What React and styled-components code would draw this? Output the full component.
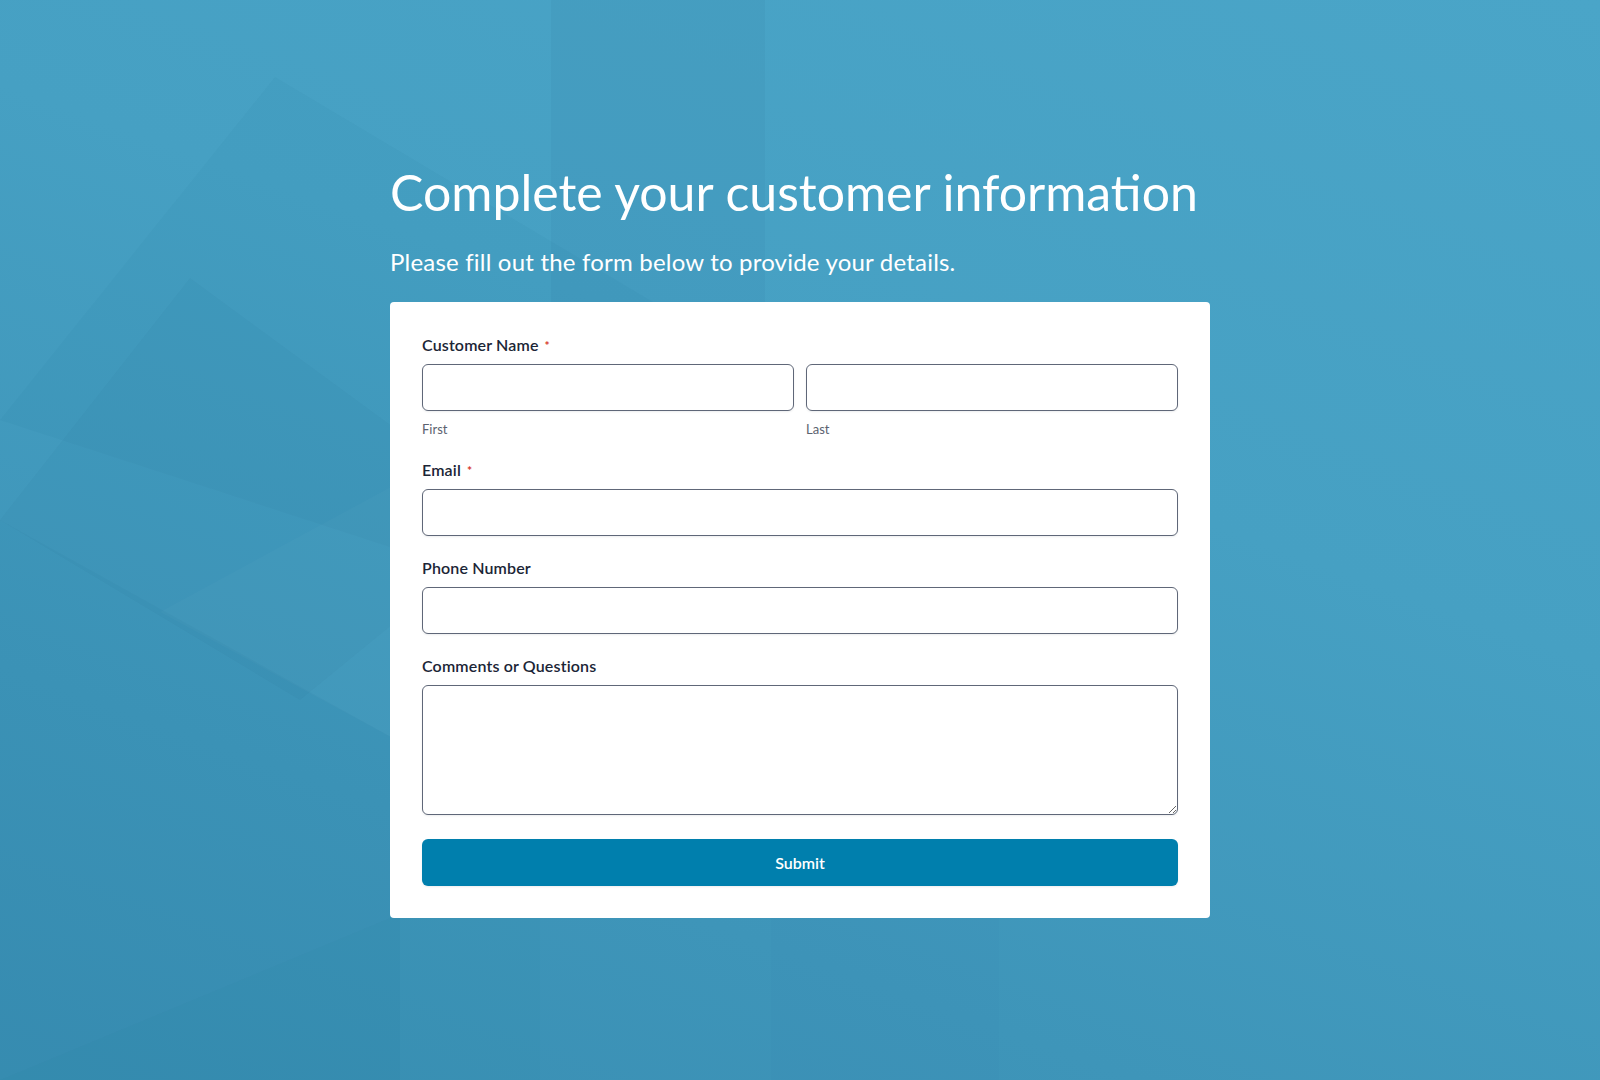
import React from "react";
import styled, { createGlobalStyle } from "styled-components";

const GlobalStyle = createGlobalStyle`
  * { box-sizing: border-box; }
  html, body { margin: 0; padding: 0; }
  body {
    font-family: Lato, "Open Sans", "Liberation Sans", sans-serif;
    -webkit-font-smoothing: antialiased;
  }
`;

const Page = styled.div`
  position: relative;
  min-height: 100vh;
  overflow: hidden;
  background: linear-gradient(200deg, #4aa5c8 0%, #46a0c3 40%, #3e95b9 75%, #398eb3 100%);
`;

const Backdrop = styled.svg`
  position: absolute;
  inset: 0;
  width: 100%;
  height: 100%;
  pointer-events: none;
`;

const Content = styled.main`
  position: relative;
  width: 820px;
  margin: 0 auto;
  padding: 162px 0 120px;
  display: flex;
  flex-direction: column;
`;

const Title = styled.h1`
  margin: 0;
  font-family: Lato, "Liberation Sans", sans-serif;
  font-weight: 400;
  font-size: 50px;
  line-height: 60px;
  color: #ffffff;
  letter-spacing: 0;
`;

const Subtitle = styled.p`
  margin: 25px 0 26px;
  font-size: 24px;
  line-height: 29px;
  font-weight: 400;
  color: #ffffff;
  letter-spacing: 0.2px;
`;

const Card = styled.form`
  background: #ffffff;
  border-radius: 4px;
  padding: 31px 32px 32px;
  display: flex;
  flex-direction: column;
`;

const Field = styled.div`
  display: flex;
  flex-direction: column;
  margin-bottom: ${(p) => p.$gap || 20}px;
`;

const Label = styled.label`
  display: flex;
  align-items: center;
  gap: 6px;
  font-size: 16px;
  line-height: 24px;
  font-weight: 600;
  color: #1b2536;
  margin-bottom: 7px;
  letter-spacing: 0.15px;
`;

const Required = styled.span`
  color: #d6362b;
  font-size: 12px;
  font-weight: 700;
  line-height: 1;
  transform: translateY(1px);
`;

const NameRow = styled.div`
  display: grid;
  grid-template-columns: 1fr 1fr;
  column-gap: 12px;
`;

const NameCol = styled.div`
  display: flex;
  flex-direction: column;
`;

const Input = styled.input`
  height: 47px;
  width: 100%;
  border: 1px solid #5f6778;
  border-radius: 6px;
  background: #fff;
  box-shadow: 0 1px 2px rgba(15, 23, 42, 0.08);
  padding: 0 12px;
  font-family: inherit;
  font-size: 16px;
  outline: none;
`;

const TextArea = styled.textarea`
  height: 130px;
  width: 100%;
  border: 1px solid #5f6778;
  border-radius: 6px;
  background: #fff;
  box-shadow: 0 1px 2px rgba(15, 23, 42, 0.08);
  padding: 10px 12px;
  font-family: inherit;
  font-size: 16px;
  resize: vertical;
  outline: none;
  display: block;
`;

const SubLabel = styled.span`
  margin-top: 9px;
  font-size: 13px;
  line-height: 18px;
  color: #5b6270;
`;

const Submit = styled.button`
  height: 47px;
  width: 100%;
  border: none;
  border-radius: 6px;
  background: #007fad;
  color: #ffffff;
  font-family: inherit;
  font-size: 16px;
  font-weight: 600;
  cursor: pointer;
  box-shadow: 0 1px 2px rgba(15, 23, 42, 0.08);
`;

function BackgroundShapes() {
  return (
    <Backdrop viewBox="0 0 1600 1080" preserveAspectRatio="none" aria-hidden="true">
      <rect x="551" y="0" width="214" height="420" fill="#0b4d6e" opacity="0.05" />
      <polygon points="275,77 700,330 430,560 0,420" fill="#0b4d6e" opacity="0.035" />
      <polygon points="190,278 520,520 300,700 0,520" fill="#0b4d6e" opacity="0.03" />
      <polygon points="0,520 400,742 400,1080 0,1080" fill="#0b4d6e" opacity="0.035" />
      <polygon points="160,612 400,482 400,742" fill="#ffffff" opacity="0.02" />
      <polygon points="390,918 540,918 540,1080 0,1080" fill="#0b4d6e" opacity="0.02" />
      <rect x="771" y="918" width="228" height="162" fill="#0b4d6e" opacity="0.015" />
    </Backdrop>
  );
}

export default function App() {
  return (
    <>
      <GlobalStyle />
      <Page>
        <BackgroundShapes />
        <Content>
          <Title>Complete your customer information</Title>
          <Subtitle>Please fill out the form below to provide your details.</Subtitle>
          <Card onSubmit={(e) => e.preventDefault()}>
            <Field>
              <Label>
                Customer Name <Required>*</Required>
              </Label>
              <NameRow>
                <NameCol>
                  <Input type="text" aria-label="First" />
                  <SubLabel>First</SubLabel>
                </NameCol>
                <NameCol>
                  <Input type="text" aria-label="Last" />
                  <SubLabel>Last</SubLabel>
                </NameCol>
              </NameRow>
            </Field>
            <Field>
              <Label>
                Email <Required>*</Required>
              </Label>
              <Input type="email" />
            </Field>
            <Field>
              <Label>Phone Number</Label>
              <Input type="tel" />
            </Field>
            <Field $gap={24}>
              <Label>Comments or Questions</Label>
              <TextArea />
            </Field>
            <Submit type="submit">Submit</Submit>
          </Card>
        </Content>
      </Page>
    </>
  );
}
